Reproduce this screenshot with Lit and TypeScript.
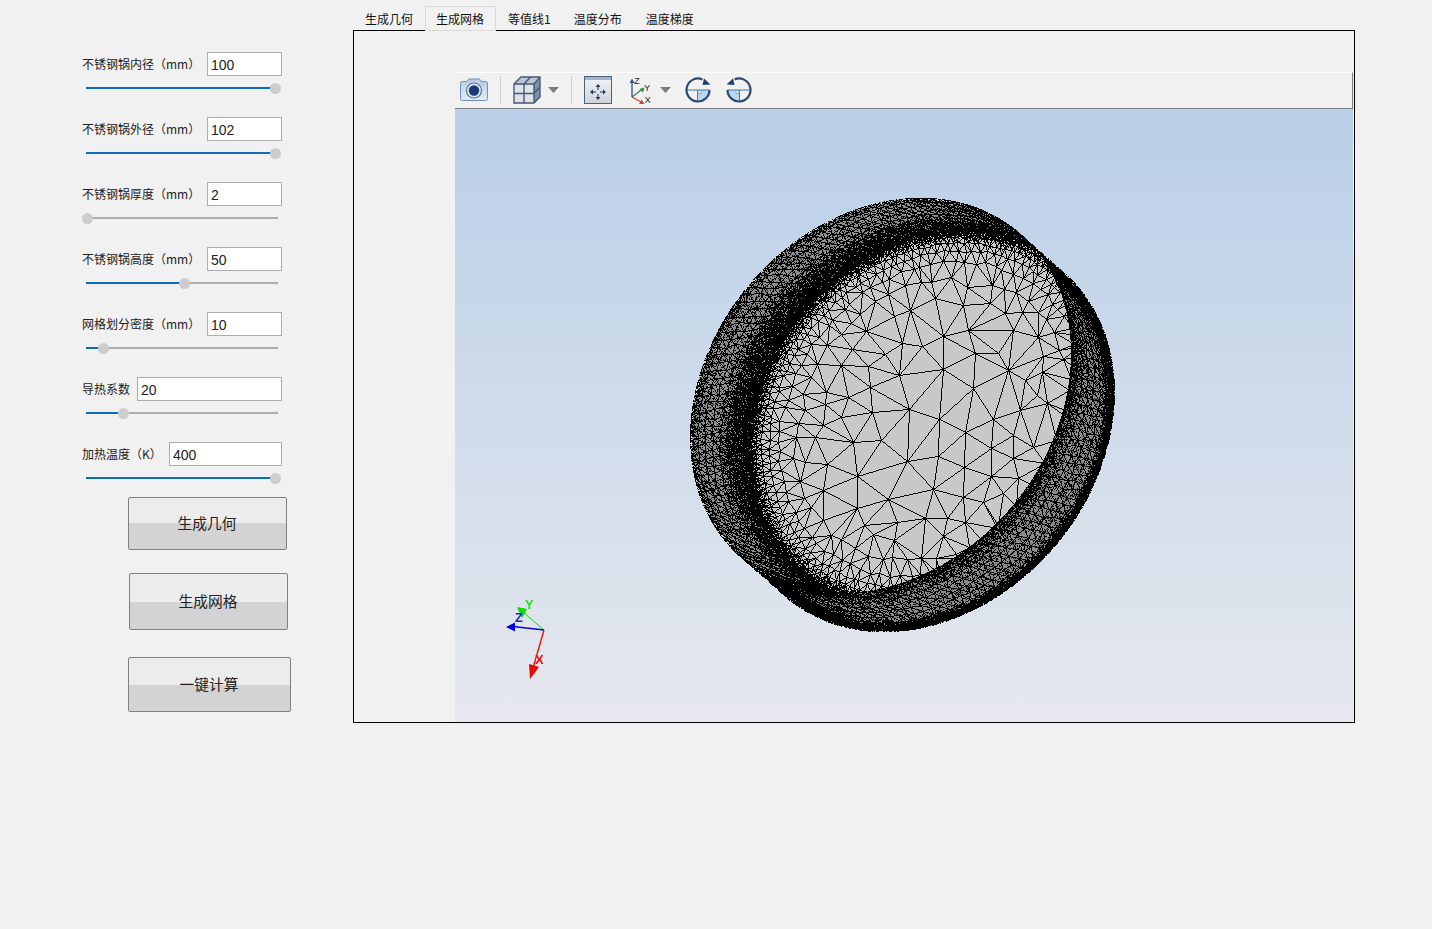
import { LitElement, html, css, svg } from 'lit';
import { customElement } from 'lit/decorators.js';

interface Ellipse { cx: number; cy: number; a: number; b: number; }
type Pt = [number, number];

const PHI = (-50 * Math.PI) / 180;
const COS = Math.cos(PHI);
const SIN = Math.sin(PHI);

const RIM: Ellipse = { cx: 880, cy: 395, a: 214, b: 172 };
const BODY: Ellipse = { cx: 924, cy: 434, a: 208, b: 170 };
const FLOOR: Ellipse = { cx: 932, cy: 419, a: 201, b: 168 };

// hand-read vertices of the big central triangles
const SEEDS: Pt[] = [
  [943, 369], [899, 375], [973, 388], [872, 412], [909, 409], [939, 419], [965, 432], [993, 419],
  [841, 417], [853, 442], [881, 440], [907, 461], [938, 456], [964, 467], [991, 448], [857, 476],
  [888, 499], [933, 489], [963, 497], [991, 476], [975, 353], [943, 336], [922, 346], [902, 343],
  [885, 354], [868, 366], [848, 397], [870, 387], [1013, 435], [1013, 458], [998, 353], [1008, 370],
  [1020, 410], [1037, 395], [1025, 380], [925, 518], [897, 522], [857, 508], [823, 490], [827, 464],
  [805, 462], [815, 437], [805, 410], [823, 425], [947, 518], [965, 522], [983, 502], [1003, 493],
  [1018, 478], [1033, 447], [1047, 403], [1038, 337], [1005, 313], [967, 287], [935, 298], [963, 305],
  [990, 303], [1013, 330], [1022, 312],
];

function rng(seed: number) {
  return () => {
    seed |= 0;
    seed = (seed + 0x6d2b79f5) | 0;
    let t = Math.imul(seed ^ (seed >>> 15), 1 | seed);
    t = (t + Math.imul(t ^ (t >>> 7), 61 | t)) ^ t;
    return ((t ^ (t >>> 14)) >>> 0) / 4294967296;
  };
}

function norm(e: Ellipse, x: number, y: number) {
  const dx = x - e.cx;
  const dy = y - e.cy;
  const u = dx * COS + dy * SIN;
  const v = -dx * SIN + dy * COS;
  return Math.sqrt((u * u) / (e.a * e.a) + (v * v) / (e.b * e.b));
}

function onEllipse(e: Ellipse, th: number, r = 1): Pt {
  const u = e.a * r * Math.cos(th);
  const v = e.b * r * Math.sin(th);
  return [e.cx + u * COS - v * SIN, e.cy + u * SIN + v * COS];
}

function delaunayEdges(pts: Pt[]): [number, number][] {
  const all: Pt[] = [...pts, [-5000, -5000], [7000, -5000], [1000, 7000]];
  const n = pts.length;
  let tris: number[][] = [[n, n + 1, n + 2]];
  const inCircle = (t: number[], p: Pt) => {
    const [ax, ay] = all[t[0]];
    const [bx, by] = all[t[1]];
    const [cx, cy] = all[t[2]];
    const d = 2 * (ax * (by - cy) + bx * (cy - ay) + cx * (ay - by));
    const ux = ((ax * ax + ay * ay) * (by - cy) + (bx * bx + by * by) * (cy - ay) + (cx * cx + cy * cy) * (ay - by)) / d;
    const uy = ((ax * ax + ay * ay) * (cx - bx) + (bx * bx + by * by) * (ax - cx) + (cx * cx + cy * cy) * (bx - ax)) / d;
    return (p[0] - ux) ** 2 + (p[1] - uy) ** 2 < (ax - ux) ** 2 + (ay - uy) ** 2;
  };
  for (let i = 0; i < n; i++) {
    const keep: number[][] = [];
    const edges = new Map<number, [number, number]>();
    for (const t of tris) {
      if (inCircle(t, pts[i])) {
        for (const [a, b] of [[t[0], t[1]], [t[1], t[2]], [t[2], t[0]]]) {
          const key = Math.min(a, b) * 100000 + Math.max(a, b);
          if (edges.has(key)) edges.delete(key);
          else edges.set(key, [a, b]);
        }
      } else keep.push(t);
    }
    edges.forEach(([a, b]) => keep.push([a, b, i]));
    tris = keep;
  }
  const out = new Map<number, [number, number]>();
  for (const t of tris) {
    for (const [a, b] of [[t[0], t[1]], [t[1], t[2]], [t[2], t[0]]]) {
      if (a >= n || b >= n) continue;
      out.set(Math.min(a, b) * 100000 + Math.max(a, b), [a, b]);
    }
  }
  return [...out.values()];
}

function floorPoints(rand: () => number): Pt[] {
  const pts: Pt[] = [...SEEDS];
  const size = (r: number) => 2.8 + 21 * Math.pow(Math.min(1, Math.max(0, 1 - r) / 0.4), 1.1);
  let r = 0.5;
  while (r < 1.02) {
    const h = size(r);
    const count = Math.round((2 * Math.PI * 180 * r) / h);
    const start = rand() * 6.28;
    for (let i = 0; i < count; i++) {
      const th = start + ((i + (rand() - 0.5) * 0.5) / count) * Math.PI * 2;
      const p = onEllipse(FLOOR, th, r + ((rand() - 0.5) * 0.35 * h) / 180);
      if (norm(RIM, p[0], p[1]) > 1.05) continue;
      if (SEEDS.some((s) => Math.hypot(s[0] - p[0], s[1] - p[1]) < 0.8 * Math.max(h, 14))) continue;
      pts.push(p);
    }
    r += h / 180;
  }
  // the rim cuts the floor on the lower right, keep the mesh running up to it
  for (let th = 0; th < Math.PI * 2; th += 0.12) {
    const p = onEllipse(RIM, th, 1.02);
    if (norm(FLOOR, p[0], p[1]) < 0.85) pts.push(p);
  }
  return pts;
}

@customElement('mesh-view')
export class MeshView extends LitElement {
  static styles = css`
    :host {
      display: block;
      position: relative;
      width: 898px;
      height: 613px;
      background: linear-gradient(#b9cfe7, #e6e8ee);
    }
    canvas { display: block; }
    .triad { position: absolute; left: 40px; top: 484px; }
    .triad text { font: bold 13px 'Liberation Sans', sans-serif; }
  `;

  firstUpdated() {
    const canvas = this.renderRoot.querySelector('canvas') as HTMLCanvasElement;
    this.drawMesh(canvas);
  }

  private drawMesh(canvas: HTMLCanvasElement) {
    const W = canvas.width;
    const H = canvas.height;
    const X0 = 455;
    const Y0 = 109;
    const ctx = canvas.getContext('2d') as CanvasRenderingContext2D;
    const img = ctx.createImageData(W, H);
    const region = new Uint8Array(W * H);
    const rand = rng(4711);
    const dx = BODY.cx - RIM.cx;
    const dy = BODY.cy - RIM.cy;

    const put = (i: number, v: number, a = 255) => {
      img.data[i * 4] = v;
      img.data[i * 4 + 1] = v;
      img.data[i * 4 + 2] = v;
      img.data[i * 4 + 3] = a;
    };

    for (let y = 190; y < 640; y++) {
      for (let x = 685; x < 1120; x++) {
        const i = x - X0 + (y - Y0) * W;
        const rr = norm(RIM, x, y);
        if (rr <= 1) {
          const fr = norm(FLOOR, x, y);
          if (fr <= 1) {
            region[i] = 3;
            // the mesh gets too fine to resolve near the floor edge
            const p = fr > 0.92 ? Math.pow((fr - 0.92) / 0.08, 1.5) * 0.92 : 0;
            put(i, rand() < p ? 0 : 0xc8);
          } else {
            region[i] = 2;
            const t = (fr - 1) / (fr - 1 + (1 - rr));
            let p = 0.24;
            if (t < 0.34) p = 0.99 - (t / 0.34) * 0.2;
            else if (t < 0.56) p = 0.79 - ((t - 0.34) / 0.22) * 0.55;
            if (t > 0.86) p = 0.24 + ((t - 0.86) / 0.14) * 0.6;
            put(i, rand() < p ? 0 : 0x8e);
            if (1 - rr < 0.01 && rand() < 0.3) put(i, 0xd8);
          }
          continue;
        }
        // outer wall: first sweep step of the rim that reaches this pixel
        let s = -1;
        let minN = 9;
        for (let k = 0; k <= 24; k++) {
          const n = norm(RIM, x - (dx * k) / 24, y - (dy * k) / 24);
          if (n <= 1 && s < 0) s = k / 24;
          if (n < minN) minN = n;
        }
        if (s < 0) continue;
        region[i] = 1;
        let p = 0.22;
        if (s < 0.36) p = 0.98 - (s / 0.36) * 0.76;
        if (minN > 0.93) p = Math.max(p, Math.min(0.99, 0.22 + ((minN - 0.93) / 0.035) * 0.77));
        put(i, rand() < p ? 0 : 0x8a);
        if (minN > 0.996 && rand() < 0.3) put(i, 0xd8);
      }
    }

    const line = (a: Pt, b: Pt, want: number) => {
      let x0 = Math.round(a[0]) - X0;
      let y0 = Math.round(a[1]) - Y0;
      const x1 = Math.round(b[0]) - X0;
      const y1 = Math.round(b[1]) - Y0;
      const sx = x0 < x1 ? 1 : -1;
      const sy = y0 < y1 ? 1 : -1;
      const ddx = Math.abs(x1 - x0);
      const ddy = Math.abs(y1 - y0);
      let err = ddx - ddy;
      for (;;) {
        if (x0 >= 0 && y0 >= 0 && x0 < W && y0 < H) {
          const i = x0 + y0 * W;
          if (region[i] === want) put(i, 0);
        }
        if (x0 === x1 && y0 === y1) break;
        const e2 = 2 * err;
        if (e2 > -ddy) { err -= ddy; x0 += sx; }
        if (e2 < ddx) { err += ddx; y0 += sy; }
      }
    };

    // structured jittered triangles on the two walls
    const wall = (from: Ellipse, to: Ellipse, want: number, rows: number, cols: number) => {
      const grid: Pt[][] = [];
      for (let k = 0; k <= rows; k++) {
        const row: Pt[] = [];
        for (let j = 0; j < cols; j++) {
          const off = k % 2 ? 0.5 : 0;
          const th = ((j + off + (rand() - 0.5) * 0.35) / cols) * Math.PI * 2;
          const t = (k + (rand() - 0.5) * 0.3) / rows;
          const a = onEllipse(from, th);
          const b = onEllipse(to, th);
          row.push([a[0] + (b[0] - a[0]) * t, a[1] + (b[1] - a[1]) * t]);
        }
        grid.push(row);
      }
      for (let k = 0; k <= rows; k++) {
        for (let j = 0; j < cols; j++) {
          line(grid[k][j], grid[k][(j + 1) % cols], want);
          if (k < rows) {
            const o = k % 2 ? 1 : -1;
            line(grid[k][j], grid[k + 1][j], want);
            line(grid[k][j], grid[k + 1][(j + o + cols) % cols], want);
          }
        }
      }
    };
    wall(FLOOR, RIM, 2, 8, 150);
    wall(RIM, BODY, 1, 7, 150);

    const pts = floorPoints(rand);
    for (const [a, b] of delaunayEdges(pts)) line(pts[a], pts[b], 3);

    ctx.putImageData(img, 0, 0);
  }

  render() {
    return html`
      <canvas width="898" height="613"></canvas>
      <svg class="triad" width="70" height="100" viewBox="0 0 70 100">
        <path d="M49 37L28 19" stroke="#00e000" stroke-width="1" fill="none" />
        <path d="M22 14l10 2-5 9z" fill="#00e000" />
        <path d="M49 37L18 33.500" stroke="#0000e0" stroke-width="1.300" fill="none" />
        <path d="M11 34l9-4.500v9z" fill="#0000e0" />
        <path d="M49 37L38 75" stroke="#f00000" stroke-width="1.300" fill="none" />
        <path d="M35 86l-1-15 10 3z" fill="#f00000" />
        <text x="30" y="16" fill="#22dd22">Y</text>
        <text x="20" y="29" fill="#2020dd">Z</text>
        <text x="40" y="71" fill="#ee1010">X</text>
      </svg>
    `;
  }
}

const SLIDERS = [
  { label: '不锈钢锅内径（mm）', value: '100', width: 75, pos: 189 },
  { label: '不锈钢锅外径（mm）', value: '102', width: 75, pos: 189 },
  { label: '不锈钢锅厚度（mm）', value: '2', width: 75, pos: 1 },
  { label: '不锈钢锅高度（mm）', value: '50', width: 75, pos: 98 },
  { label: '网格划分密度（mm）', value: '10', width: 75, pos: 17 },
  { label: '导热系数', value: '20', width: 145, pos: 37 },
  { label: '加热温度（K）', value: '400', width: 113, pos: 189 },
];

const TABS = ['生成几何', '生成网格', '等值线1', '温度分布', '温度梯度'];

const caret = svg`<svg class="caret" width="11" height="6" viewBox="0 0 11 6"><path d="M0 0h11L5.500 6z" fill="#7c7c7c" /></svg>`;

const rotateArt = svg`
  <path d="M12.500 13V24.500A11.500 11.500 0 0 0 24.500 13z" fill="#bcd8f0" />
  <path d="M1.500 13H24.500M12.500 13V24.500" stroke="#3f79b3" stroke-width="1" fill="none" />
  <path d="M13 13.500h3v3h-3z" fill="#e6f1fa" stroke="#5b93c6" stroke-width="0.700" />
  <path d="M24.500 13A11.500 11.500 0 1 1 17.500 2.400" stroke="#2d4a70" stroke-width="2.200" fill="none" />
  <path d="M19 1.500L25.500 7.500L17.500 8z" fill="#1f3f70" />
`;

@customElement('app-root')
export class AppRoot extends LitElement {
  static styles = css`
    :host {
      display: flex;
      width: 1432px;
      height: 929px;
      background: #f1f1f1;
      font-family: 'Noto Sans CJK SC', sans-serif;
      color: #222;
      overflow: hidden;
    }
    .side {
      width: 353px;
      flex: none;
      box-sizing: border-box;
      padding: 52px 0 0 82px;
      display: flex;
      flex-direction: column;
    }
    .param { height: 42px; margin-bottom: 23px; width: 200px; }
    .param:nth-child(7) { margin-bottom: 13px; }
    .head { display: flex; justify-content: space-between; align-items: center; height: 24px; }
    .head label { font-size: 12px; white-space: nowrap; padding-bottom: 2px; }
    .head input {
      box-sizing: border-box;
      height: 24px;
      border: 1px solid #adadad;
      background: #fff;
      padding: 2px 0 0 3px;
      font: 14px 'Liberation Sans', sans-serif;
      color: #222;
      outline: none;
    }
    .slider {
      position: relative;
      margin: 11px 0 0 4px;
      width: 192px;
      height: 2px;
      background: #adadad;
    }
    .fill { height: 2px; background: #0a6cbd; }
    .knob {
      position: absolute;
      top: -4.500px;
      width: 11px;
      height: 11px;
      margin-left: -5.500px;
      border-radius: 50%;
      background: #cdcdcd;
    }
    button {
      box-sizing: border-box;
      display: block;
      border: 1px solid #808080;
      border-radius: 2px;
      background: linear-gradient(#ececec 50%, #d3d3d3 50%);
      font: 14.700px 'Noto Sans CJK SC', sans-serif;
      color: #222;
      padding: 0 1px 3px 0;
    }
    .b1 { margin-left: 46px; width: 159px; height: 53px; }
    .b2 { margin: 23px 0 0 47px; width: 159px; height: 57px; }
    .b3 { margin: 27px 0 0 46px; width: 163px; height: 55px; }
    .main { padding-top: 6px; }
    .tabs { display: flex; height: 25px; position: relative; z-index: 1; }
    .tab {
      box-sizing: border-box;
      padding: 0 11px;
      font-size: 12px;
      line-height: 23px;
      color: #111;
      border: 1px solid transparent;
      border-bottom: none;
    }
    .tab.on {
      background: #f1f1f1;
      border: 1px solid #d9d9d9;
      padding: 0 11px 0 10px;
    }
    .tab:nth-child(3) { padding-right: 10px; }
    .frame {
      box-sizing: border-box;
      margin-top: -1px;
      width: 1002px;
      height: 693px;
      border: 1px solid #000;
      padding: 41px 0 0 101px;
    }
    .toolbar {
      box-sizing: border-box;
      width: 898px;
      height: 37px;
      background: #f1f1f1;
      border-top: 1px solid #fff;
      border-right: 1px solid #808080;
      border-bottom: 1px solid #808080;
      padding: 0 0 2px 5px;
      display: flex;
      align-items: center;
    }
    .toolbar svg { display: block; flex: none; }
    .toolbar text { font: 9.500px 'Liberation Sans', sans-serif; fill: #2c2c2c; }
    .sep { width: 1px; height: 28px; background: #cfcfcf; margin-left: 12px; flex: none; }
    .toolbar .cube, .toolbar .fit { margin-left: 12px; }
    .toolbar .caret { margin-left: 7px; }
    .toolbar .axes { margin-left: 17px; }
    .toolbar .axes + .caret { margin-left: 8px; }
    .toolbar .rot { margin-left: 14px; }
    .toolbar .rot2 { margin-left: 15px; }
  `;

  render() {
    return html`
      <div class="side">
        ${SLIDERS.map(
          (s) => html`
            <div class="param">
              <div class="head">
                <label>${s.label}</label>
                <input .value=${s.value} style="width:${s.width}px" />
              </div>
              <div class="slider">
                <div class="fill" style="width:${s.pos}px"></div>
                <div class="knob" style="left:${s.pos}px"></div>
              </div>
            </div>
          `,
        )}
        <button class="b1">生成几何</button>
        <button class="b2">生成网格</button>
        <button class="b3">一键计算</button>
      </div>
      <div class="main">
        <div class="tabs">
          ${TABS.map((t, i) => html`<div class="tab ${i === 1 ? 'on' : ''}">${t}</div>`)}
        </div>
        <div class="frame">
          <div class="toolbar">
            <svg width="28" height="24" viewBox="0 0 28 24">
              <defs>
                <linearGradient id="cam" x1="0" y1="0" x2="0" y2="1">
                  <stop offset="0" stop-color="#b6cde8" />
                  <stop offset="1" stop-color="#e3ebf5" />
                </linearGradient>
              </defs>
              <path d="M2.500 3.500H7L9 1H19.500L21 3.500H25.500A2 2 0 0 1 27.500 5.500V20.500A2 2 0 0 1 25.500 22.500H2.500A2 2 0 0 1 .5 20.500V5.500A2 2 0 0 1 2.500 3.500z" fill="url(#cam)" stroke="#6f8fb4" />
              <circle cx="14" cy="12.500" r="7.500" fill="#dfe8f3" stroke="#56769e" stroke-width="1.200" />
              <circle cx="14" cy="12.500" r="5.200" fill="#1c3a72" />
              <circle cx="24" cy="6.500" r="1" fill="#fff" stroke="#7e9abb" stroke-width="0.500" />
            </svg>
            <div class="sep"></div>
            <svg class="cube" width="28" height="28" viewBox="0 0 28 28">
              <path d="M1 8L8 1H27L21 8z" fill="#bcc5d3" />
              <path d="M21 8L27 1V21L21 27z" fill="#8190a9" />
              <path d="M1 8H21V27H1z" fill="#dfe2e8" />
              <path d="M1 8L8 1H27V21L21 27H1zM1 8H21V27M21 8L27 1M11 8V27M1 17.500H21M21 17.500L27 11M11 8L17.500 1" fill="none" stroke="#46597a" stroke-width="1.400" />
            </svg>
            ${caret}
            <div class="sep"></div>
            <svg class="fit" width="28" height="28" viewBox="0 0 28 28">
              <defs>
                <linearGradient id="fit" x1="0" y1="0" x2="0" y2="1">
                  <stop offset="0" stop-color="#f2f3f6" />
                  <stop offset="1" stop-color="#cfd3da" />
                </linearGradient>
              </defs>
              <rect x=".5" y=".5" width="27" height="27" fill="url(#fit)" stroke="#4d607f" />
              <rect x="1" y="1" width="26" height="3" fill="#a3b3ca" />
              <path d="M14 8l2.500 3h-5zM14 24l2.500-3h-5zM6 16l3-2.500v5zM22 16l-3-2.500v5z" fill="#1f3557" />
              <path d="M14 10v4M14 18v4M8 16h4M16 16h4" stroke="#1f3557" stroke-width="1" fill="none" />
            </svg>
            <svg class="axes" width="23" height="28" viewBox="0 0 23 28">
              <path d="M3 21V6" stroke="#2b4fa3" stroke-width="1.300" fill="none" />
              <path d="M3 2.500l2.500 4.500h-5z" fill="#2b4fa3" />
              <path d="M3 21L12 14" stroke="#2e8c45" stroke-width="1.300" fill="none" />
              <path d="M15.500 11.500l-1.500 5-3.500-3.500z" fill="#2e8c45" />
              <path d="M3 21L12 26" stroke="#d8403a" stroke-width="1.300" fill="none" />
              <path d="M15.500 28l-5.500 0 2.500-4.500z" fill="#d8403a" />
              <text x="5" y="8">Z</text>
              <text x="15" y="15">Y</text>
              <text x="15.500" y="27">X</text>
            </svg>
            ${caret}
            <svg class="rot" width="26" height="26" viewBox="0 0 26 26">${rotateArt}</svg>
            <svg class="rot2" width="26" height="26" viewBox="0 0 26 26"><g transform="translate(26 0) scale(-1 1)">${rotateArt}</g></svg>
          </div>
          <mesh-view></mesh-view>
        </div>
      </div>
    `;
  }
}
